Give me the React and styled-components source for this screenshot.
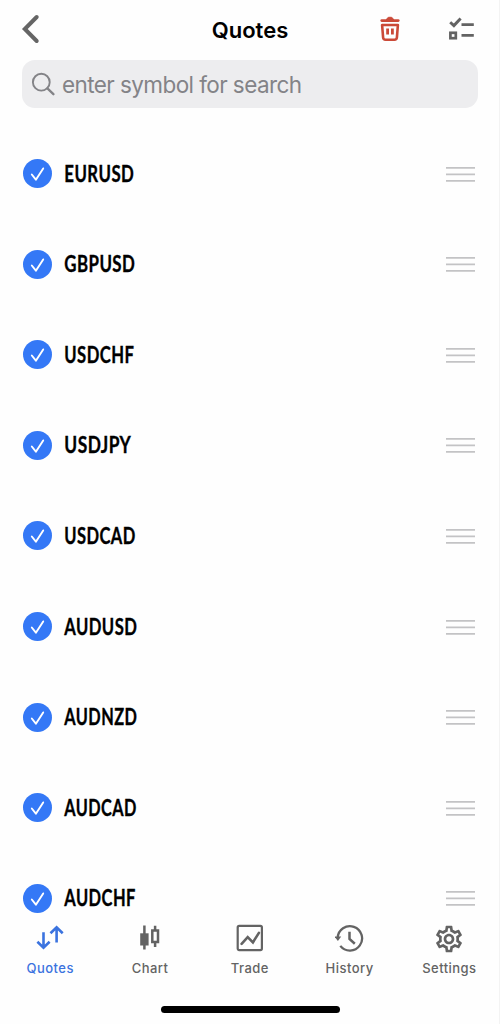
import React from 'react';
import styled, { createGlobalStyle } from 'styled-components';
import { MdOutlineSettings } from 'react-icons/md';

const symbols = [
  { name: 'EURUSD', width: 70 },
  { name: 'GBPUSD', width: 71 },
  { name: 'USDCHF', width: 70 },
  { name: 'USDJPY', width: 67 },
  { name: 'USDCAD', width: 71.5 },
  { name: 'AUDUSD', width: 73 },
  { name: 'AUDNZD', width: 73 },
  { name: 'AUDCAD', width: 72.5 },
  { name: 'AUDCHF', width: 71.5 },
];

const BackIcon = () => (
  <svg width="20" height="30" viewBox="0 0 20 30" fill="none" stroke="#656565" strokeWidth="4" strokeLinecap="round" strokeLinejoin="miter">
    <path d="M15.7 3 3.8 15l11.9 12" />
  </svg>
);

const TrashIcon = () => (
  <svg width="20" height="26" viewBox="0 0 20 26" fill="none" stroke="#cb4a38">
    <path d="M1.7 4.6h16.6" strokeWidth="2.6" strokeLinecap="round" />
    <path d="M6.5 4c.6-2.1 1.5-2.7 2.6-2.7h1.8c1.1 0 2 .6 2.6 2.7z" fill="#cb4a38" strokeWidth="1" />
    <path d="M2.1 9h15.8l-1 12.5q-.2 2.3-2.4 2.3h-9q-2.2 0-2.4-2.3z" strokeWidth="2.6" strokeLinejoin="round" />
    <path d="M7.6 12.6v6M12.4 12.6v6" strokeWidth="2.8" />
  </svg>
);

const ChecklistIcon = () => (
  <svg width="26" height="24" viewBox="0 0 26 24" fill="none" stroke="#636363" strokeWidth="2.7">
    <path d="M1.2 5.2l3.7 3.4 6.7-7.2" strokeWidth="2.9" />
    <path d="M12.5 7.7h12.3M12.5 18.3h12.3" />
    <rect x="1.4" y="15.8" width="5.4" height="5.4" />
  </svg>
);

const SearchIcon = () => (
  <svg width="24" height="24" viewBox="0 0 24 24" fill="none" stroke="#838387" strokeWidth="1.9" strokeLinecap="round">
    <circle cx="10.3" cy="10.2" r="8.4" />
    <path d="M16.4 16.4l6 5.8" strokeWidth="2.3" />
  </svg>
);

const CheckIcon = () => (
  <svg width="29" height="29" viewBox="0 0 29 29" fill="none" stroke="#fff" strokeWidth="1.9" strokeLinecap="round" strokeLinejoin="round">
    <path d="M8.8 15.5l4.1 5.2 7.3-11.3" />
  </svg>
);

const HandleIcon = () => (
  <svg width="29" height="16" viewBox="0 0 29 16" stroke="#c3c3c5" strokeWidth="1.7">
    <path d="M0 1.9h29M0 8.4h29M0 14.9h29" />
  </svg>
);

const QuotesIcon = () => (
  <svg width="30" height="30" viewBox="0 0 30 30" fill="none" stroke="#3b73df" strokeWidth="2.6">
    <path d="M8.5 8.2v15.4M2.4 17.7l6.1 6 6.1-6" />
    <path d="M21.6 18.6V3.2M15.5 9.2l6.1-6 6.1 6" />
  </svg>
);

const ChartIcon = () => (
  <svg width="30" height="30" viewBox="0 0 30 30" fill="none" stroke="#636363" strokeWidth="2.5">
    <path d="M9.4 1.5v24" />
    <path d="M5.2 9.3h8.4v12.2H5.2z" fill="#636363" stroke="none" />
    <path d="M20.1 1.7v4.5M20.1 18.3v4.8" />
    <path d="M17.3 6.5h5.7v11.6h-5.7z" />
  </svg>
);

const TradeIcon = () => (
  <svg width="30" height="30" viewBox="0 0 30 30" fill="none" stroke="#636363" strokeWidth="2.2">
    <rect x="2.7" y="1.9" width="24.2" height="24.2" rx="1.5" />
    <path d="M6.6 19.8l6.1-6.6 5.2 5.2 6-9.5" strokeWidth="2.6" strokeLinecap="round" />
  </svg>
);

const HistoryIcon = () => (
  <svg width="30" height="30" viewBox="0 0 30 30" fill="none" stroke="#636363" strokeWidth="2.3">
    <path d="M2.7 13.8A12.2 12.2 0 1 1 5.3 21.9" />
    <path d="M-.6 12.6h6.8l-3.3 4.5z" fill="#636363" stroke="none" />
    <path d="M14.5 7.8v7.1l5.3 4.8" strokeWidth="2.5" />
  </svg>
);

const tabs = [
  { label: 'Quotes', icon: <QuotesIcon />, active: true },
  { label: 'Chart', icon: <ChartIcon /> },
  { label: 'Trade', icon: <TradeIcon /> },
  { label: 'History', icon: <HistoryIcon /> },
  { label: 'Settings', icon: <MdOutlineSettings size={32} color="#636363" /> },
];

const App = () => {
  return (
    <Screen>
      <GlobalStyle />
      <Header>
        <IconButton aria-label="Back"><BackIcon /></IconButton>
        <Title>Quotes</Title>
        <Actions>
          <IconButton aria-label="Delete"><TrashIcon /></IconButton>
          <IconButton aria-label="Select"><ChecklistIcon /></IconButton>
        </Actions>
      </Header>
      <SearchBar>
        <SearchIcon />
        <SearchText>enter symbol for search</SearchText>
      </SearchBar>
      <List>
        {symbols.map(({ name, width }) => (
          <Row key={name}>
            <Check><CheckIcon /></Check>
            {/* condensed lettering */}
            <SymbolName viewBox={`0 0 ${width} 30`} $width={width}>
              <text x="0.3" y="22.5" textLength={width} lengthAdjust="spacingAndGlyphs">{name}</text>
            </SymbolName>
            <Handle><HandleIcon /></Handle>
          </Row>
        ))}
      </List>
      <TabBar>
        {tabs.map(({ label, icon, active }) => (
          <Tab key={label} $active={active}>
            <TabIcon>{icon}</TabIcon>
            <span>{label}</span>
          </Tab>
        ))}
      </TabBar>
      <HomeArea>
        <HomeIndicator />
      </HomeArea>
    </Screen>
  );
};

const GlobalStyle = createGlobalStyle`
  * {
    box-sizing: border-box;
  }

  body {
    margin: 0;
    background: #fefefe;
    font-family: Inter, "Liberation Sans", sans-serif;
  }
`;

const Screen = styled.div`
  width: 500px;
  height: 1024px;
  display: flex;
  flex-direction: column;
  background: #fefefe;
  border-right: 1px solid #f3f3f3;
  overflow: hidden;
`;

const Header = styled.header`
  display: grid;
  grid-template-columns: 1fr auto 1fr;
  align-items: center;
  height: 60px;
  flex-shrink: 0;
  padding: 0 24px 2px 21px;
`;

const IconButton = styled.button`
  display: flex;
  justify-self: start;
  padding: 0;
  border: none;
  background: none;
`;

const Title = styled.h1`
  margin: 0;
  padding: 1px 0 0 4px;
  font-size: 22px;
  font-weight: 600;
  color: #000;
`;

const Actions = styled.div`
  display: flex;
  align-items: center;
  justify-content: flex-end;
  gap: 49px;
`;

const SearchBar = styled.div`
  display: flex;
  align-items: center;
  gap: 7px;
  height: 48px;
  flex-shrink: 0;
  margin: 0 21px 0 22px;
  padding: 0 9px;
  border-radius: 13px;
  background: #ededef;
`;

const SearchText = styled.span`
  font-size: 22.5px;
  letter-spacing: -0.58px;
  color: #838387;
  white-space: nowrap;
`;

const List = styled.div`
  height: 807px;
  flex-shrink: 0;
  padding-top: 20.3px;
  overflow: hidden;
`;

const Row = styled.div`
  display: flex;
  align-items: center;
  height: 90.6px;
  padding: 0 24px 0 23px;
`;

const Check = styled.span`
  display: flex;
  width: 29px;
  height: 29px;
  border-radius: 50%;
  background: #3478f6;
`;

const SymbolName = styled.svg`
  width: ${(props) => props.$width}px;
  height: 30px;
  margin-left: 12px;
  overflow: visible;
  font-family: Lato, "Open Sans", sans-serif;
  font-size: 22.6px;
  font-weight: 700;
  letter-spacing: 0.6px;
  fill: #000;
  stroke: #000;
  stroke-width: 0.35px;
`;

const Handle = styled.span`
  display: flex;
  margin-left: auto;
`;

const TabBar = styled.nav`
  display: grid;
  grid-template-columns: repeat(5, 99.8px);
  height: 70px;
  flex-shrink: 0;
  padding: 9px 0 0 0.3px;
`;

const Tab = styled.a`
  display: flex;
  flex-direction: column;
  align-items: center;
  gap: 6px;
  font-size: 13px;
  font-weight: 500;
  line-height: 17px;
  letter-spacing: 0.45px;
  color: ${(props) => (props.$active ? '#3b73df' : '#636363')};
`;

const TabIcon = styled.span`
  display: flex;
  align-items: center;
  justify-content: center;
  height: 30px;
`;

const HomeArea = styled.div`
  display: flex;
  justify-content: center;
  padding: 21px 0 0 2px;
`;

const HomeIndicator = styled.div`
  width: 179px;
  height: 7px;
  border-radius: 4px;
  background: #000;
`;

export default App;
